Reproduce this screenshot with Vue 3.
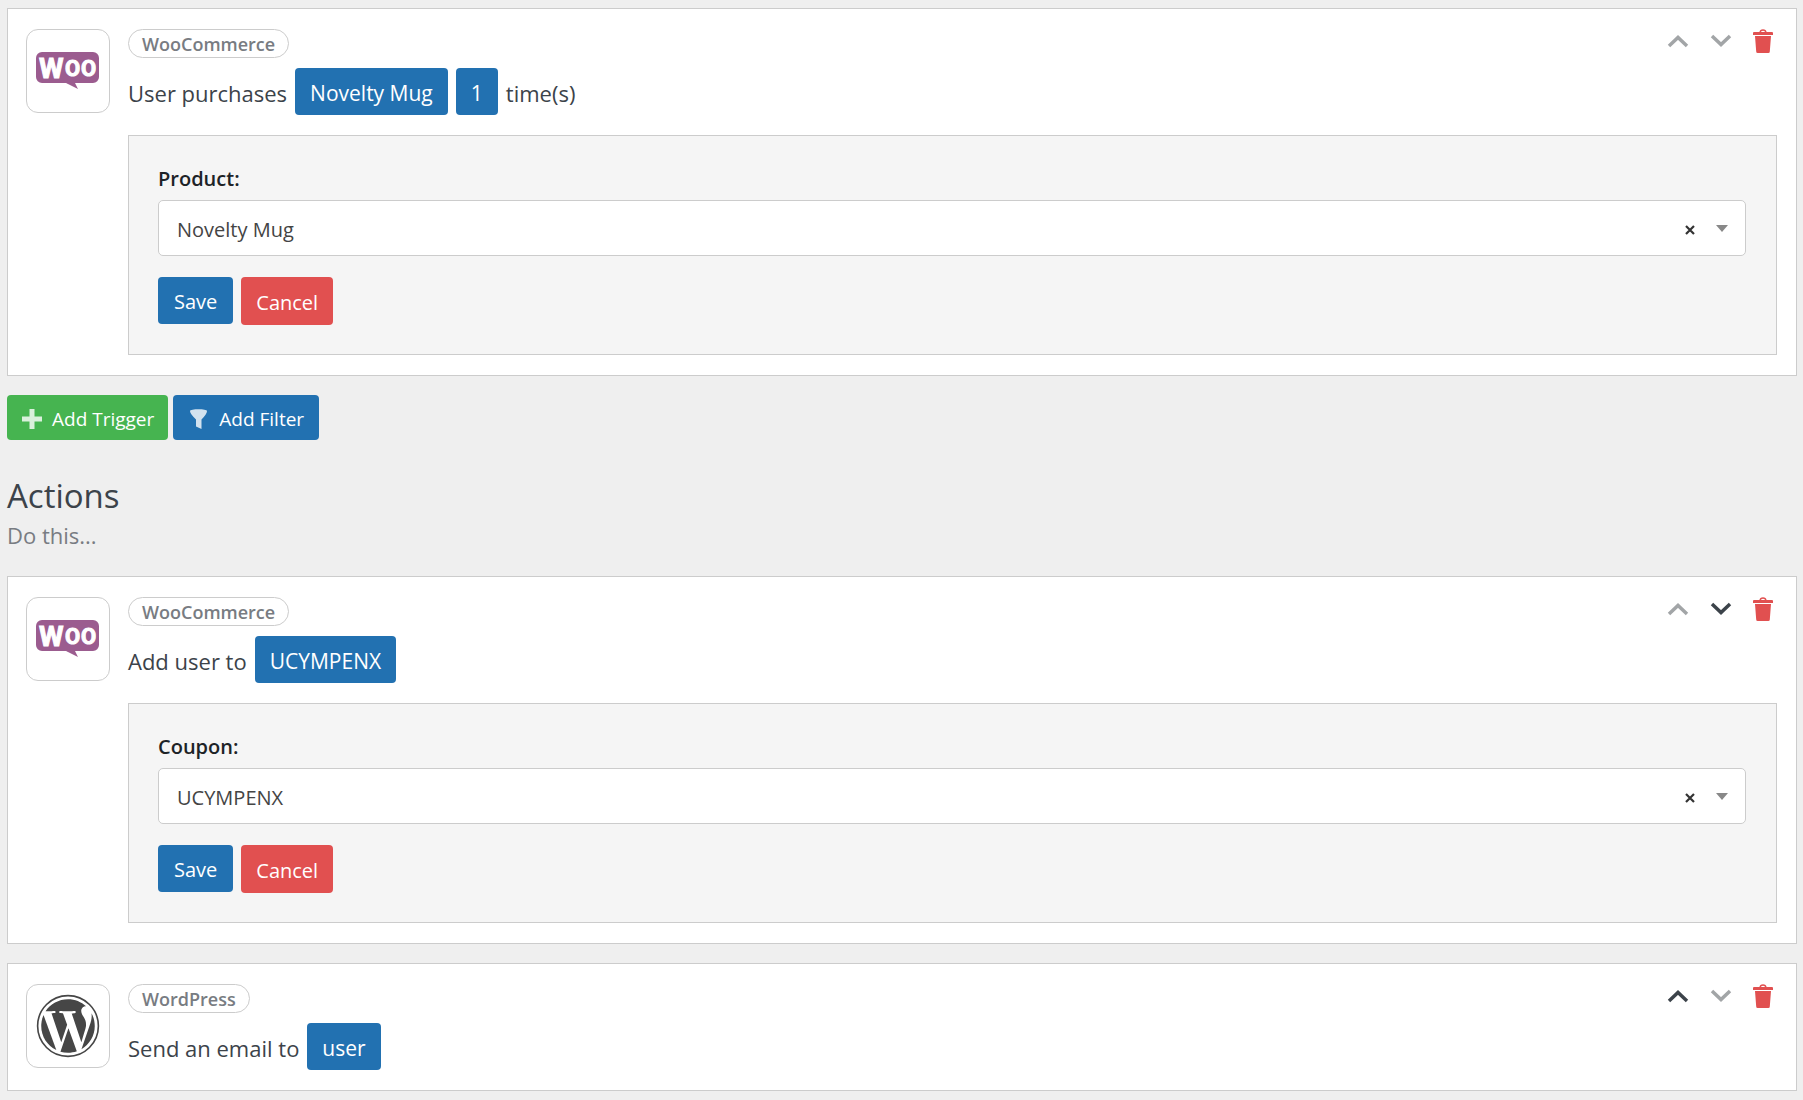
<script setup>
import { ref } from 'vue';

const triggers = ref([
    {
        id: 1,
        integration: 'WooCommerce',
        logo: 'woo',
        sentence: [
            { text: 'User purchases' },
            { tag: 'Novelty Mug' },
            { tag: '1' },
            { text: 'time(s)' },
        ],
        field: { label: 'Product:', value: 'Novelty Mug' },
        canMoveUp: false,
        canMoveDown: false,
    },
]);

const actions = ref([
    {
        id: 2,
        integration: 'WooCommerce',
        logo: 'woo',
        sentence: [{ text: 'Add user to' }, { tag: 'UCYMPENX' }],
        field: { label: 'Coupon:', value: 'UCYMPENX' },
        canMoveUp: false,
        canMoveDown: true,
    },
    {
        id: 3,
        integration: 'WordPress',
        logo: 'wordpress',
        sentence: [{ text: 'Send an email to' }, { tag: 'user' }],
        field: null,
        canMoveUp: true,
        canMoveDown: false,
    },
]);

const sections = [
    { name: 'triggers', items: triggers },
    { name: 'actions', items: actions },
];
</script>

<template>
    <main class="automation">
        <section v-for="section in sections" :key="section.name" class="section">
            <header v-if="section.name === 'actions'" class="heading">
                <h2>Actions</h2>
                <p>Do this...</p>
            </header>

            <article v-for="item in section.items.value" :key="item.id" class="item">
                <div class="logo">
                    <svg v-if="item.logo === 'woo'" width="64" height="56" viewBox="0 -8 64 56" aria-hidden="true">
                        <path fill="#9b5c8f" d="M6 1h51a6 6 0 0 1 6 6v19a6 6 0 0 1-6 6H39l3 6-12-6H6a6 6 0 0 1-6-6V7a6 6 0 0 1 6-6z" />
                        <text class="woo-w" x="3" y="27">W</text>
                        <text class="woo-o" x="29" y="25">O</text>
                        <text class="woo-o" x="45" y="25">O</text>
                    </svg>
                    <svg v-else width="64" height="64" viewBox="-0.9 -0.9 25.8 25.8" fill="#464646" aria-hidden="true">
                        <circle cx="12" cy="12" r="12.25" fill="none" stroke="#464646" stroke-width=".65" />
                        <path d="M21.469 6.825c.84 1.537 1.318 3.3 1.318 5.175 0 3.979-2.156 7.456-5.363 9.325l3.295-9.527c.615-1.54.82-2.771.82-3.864 0-.405-.026-.78-.07-1.11z" />
                        <path d="M13.488 6.93c.647-.03 1.232-.105 1.232-.105.582-.075.514-.93-.067-.899 0 0-1.755.135-2.88.135-1.064 0-2.85-.15-2.85-.15-.585-.03-.661.855-.075.885 0 0 .54.061 1.125.09l1.68 4.605-2.37 7.08L5.354 6.9c.649-.03 1.234-.1 1.234-.1.585-.075.516-.93-.065-.896 0 0-1.746.138-2.874.138-.2 0-.438-.008-.69-.015C4.911 3.15 8.235 1.215 12 1.215c2.809 0 5.365 1.072 7.286 2.833-.046-.003-.091-.009-.141-.009-1.06 0-1.812.923-1.812 1.914 0 .89.513 1.643 1.06 2.531.411.72.89 1.643.89 2.977 0 .915-.354 1.994-.821 3.479l-1.075 3.585z" />
                        <path d="M12 22.784c-1.059 0-2.081-.153-3.048-.437l3.237-9.406 3.315 9.087c.024.053.05.101.078.149-1.12.393-2.325.609-3.582.609z" />
                        <path d="M1.211 12c0-1.564.336-3.05.935-4.39L7.29 21.709C3.694 19.96 1.212 16.271 1.211 12z" />
                    </svg>
                </div>

                <div class="content">
                    <div class="top">
                        <span class="pill">{{ item.integration }}</span>

                        <div class="tools">
                            <button class="tool" :disabled="!item.canMoveUp" aria-label="Move up">
                                <svg width="22" height="26" viewBox="0 0 22 26">
                                    <path d="M2 17l9-8.500 9 8.500" fill="none" stroke="currentColor" stroke-width="3.500" />
                                </svg>
                            </button>
                            <button class="tool" :disabled="!item.canMoveDown" aria-label="Move down">
                                <svg width="22" height="26" viewBox="0 0 22 26">
                                    <path d="M2 7l9 8.500 9-8.500" fill="none" stroke="currentColor" stroke-width="3.500" />
                                </svg>
                            </button>
                            <button class="tool remove" aria-label="Delete">
                                <svg width="20" height="26" viewBox="0 0 20 26">
                                    <path d="M7 3.500c.5-3.300 5.500-3.300 6 0" fill="none" stroke="currentColor" stroke-width="1.400" />
                                    <path d="M1 3h18a1 1 0 0 1 1 1v2H0V4a1 1 0 0 1 1-1zM2 7h16l-1.200 15.500a1.500 1.500 0 0 1-1.500 1.500H4.700a1.500 1.500 0 0 1-1.500-1.500z" fill="currentColor" />
                                </svg>
                            </button>
                        </div>
                    </div>

                    <div class="sentence">
                        <template v-for="(part, i) in item.sentence" :key="i">
                            <button v-if="part.tag" class="btn tag">{{ part.tag }}</button>
                            <span v-else>{{ part.text }}</span>
                        </template>
                    </div>

                    <form v-if="item.field" class="panel" @submit.prevent>
                        <label :for="'field-' + item.id">{{ item.field.label }}</label>
                        <div class="select">
                            <select :id="'field-' + item.id">
                                <option>{{ item.field.value }}</option>
                            </select>
                            <button type="button" class="clear" aria-label="Clear">
                                <svg width="10" height="10" viewBox="0 0 10 10">
                                    <path d="M1 1l8 8M9 1L1 9" stroke="currentColor" stroke-width="2.200" />
                                </svg>
                            </button>
                            <svg class="caret" width="12" height="7" viewBox="0 0 12 7" aria-hidden="true">
                                <path d="M0 0h12L6 7z" fill="#888" />
                            </svg>
                        </div>
                        <div class="buttons">
                            <button class="btn">Save</button>
                            <button type="button" class="btn cancel">Cancel</button>
                        </div>
                    </form>
                </div>
            </article>

            <div v-if="section.name === 'triggers'" class="adders">
                <button class="add green">
                    <svg width="20" height="20" viewBox="0 0 20 20" aria-hidden="true">
                        <path d="M7.500 0h5v7.500H20v5h-7.500V20h-5v-7.500H0v-5h7.500z" fill="currentColor" />
                    </svg>
                    Add Trigger
                </button>
                <button class="add">
                    <svg width="20" height="20" viewBox="0 0 20 20" aria-hidden="true">
                        <path d="M1 2C1-.3 18-.3 18 2c0 2-2 5-5.500 8.500V20L7 17.500v-7C3.500 7 1 4 1 2z" fill="currentColor" />
                    </svg>
                    Add Filter
                </button>
            </div>
        </section>
    </main>
</template>

<style>
body {
    background: #efefef;
}
</style>

<style scoped>
.automation {
    padding: 8px 6px 8px 7px;
    font-family: "Open Sans", "Noto Sans", sans-serif;
    color: #3c434a;
}

button {
    font-family: inherit;
    cursor: pointer;
}

.item {
    display: flex;
    gap: 18px;
    padding: 20px 19px 20px 18px;
    margin-bottom: 19px;
    background: #fff;
    border: 1px solid #ccc;
}

.logo {
    display: flex;
    flex: none;
    align-items: center;
    justify-content: center;
    box-sizing: border-box;
    width: 84px;
    height: 84px;
    border: 1px solid #ccc;
    border-radius: 12px;
}

.logo text {
    fill: #fff;
    stroke: #fff;
    stroke-width: 1px;
    font-family: Roboto, sans-serif;
    font-weight: 700;
}

.woo-w {
    font-size: 28px;
}

.woo-o {
    font-size: 22px;
}

.content {
    flex: 1;
    min-width: 0;
}

.top {
    display: flex;
    justify-content: space-between;
    height: 29px;
}

.pill {
    box-sizing: border-box;
    height: 29px;
    padding: 0 13px;
    border: 1px solid #ccc;
    border-radius: 15px;
    font-size: 18px;
    font-weight: 600;
    line-height: 28px;
    color: #787c82;
}

.tools {
    display: flex;
    gap: 21px;
    padding-right: 4px;
}

.tool {
    height: 26px;
    padding: 0;
    background: none;
    border: none;
    color: #3c434a;
}

.tool:disabled {
    color: #a2a5a7;
    cursor: default;
}

.tool.remove {
    color: #e15050;
}

.tool svg, .select svg {
    display: block;
}

.sentence {
    display: flex;
    align-items: center;
    gap: 8px;
    margin-top: 10px;
    font-size: 22px;
}

.sentence span {
    padding-top: 3px;
}

.btn {
    height: 47px;
    padding: 2px 16px 0;
    background: #2271b1;
    border: none;
    border-radius: 4px;
    font-size: 20px;
    color: #fff;
}

.btn.tag {
    padding: 2px 15px 0;
    font-size: 21px;
}

.btn.cancel {
    height: 48px;
    padding: 2px 15px 0;
    background: #e15050;
}

.panel {
    margin-top: 20px;
    padding: 28px 30px 29px 29px;
    background: #f5f5f5;
    border: 1px solid #ccc;
}

.panel label {
    display: block;
    margin-bottom: 6px;
    font-size: 20px;
    font-weight: 600;
    line-height: 30px;
    color: #1d2327;
}

.select {
    position: relative;
}

select {
    display: block;
    width: 100%;
    height: 56px;
    padding: 2px 80px 0 18px;
    appearance: none;
    background: #fff;
    border: 1px solid #ccc;
    border-radius: 5px;
    font-family: inherit;
    font-size: 20px;
    color: #444;
}

.clear {
    position: absolute;
    top: 25px;
    right: 51px;
    padding: 0;
    background: none;
    border: none;
    color: #333;
}

.caret {
    position: absolute;
    top: 25px;
    right: 18px;
    pointer-events: none;
}

.buttons {
    display: flex;
    align-items: flex-start;
    gap: 8px;
    margin-top: 21px;
}

.adders {
    display: flex;
    gap: 5px;
}

.add {
    display: flex;
    align-items: center;
    gap: 10px;
    height: 45px;
    padding: 2px 15px 0 16px;
    background: #2271b1;
    border: none;
    border-radius: 4px;
    font-size: 19px;
    color: #fff;
}

.add.green {
    padding: 2px 14px 0 15px;
    background: #46b450;
}

.add svg {
    opacity: .8;
}

.heading {
    padding: 34px 0 24px;
}

.heading h2 {
    margin: 0;
    font-size: 33px;
    font-weight: 400;
    line-height: 44px;
}

.heading p {
    margin: 0;
    font-size: 22px;
    line-height: 34px;
    color: #787c82;
}
</style>
